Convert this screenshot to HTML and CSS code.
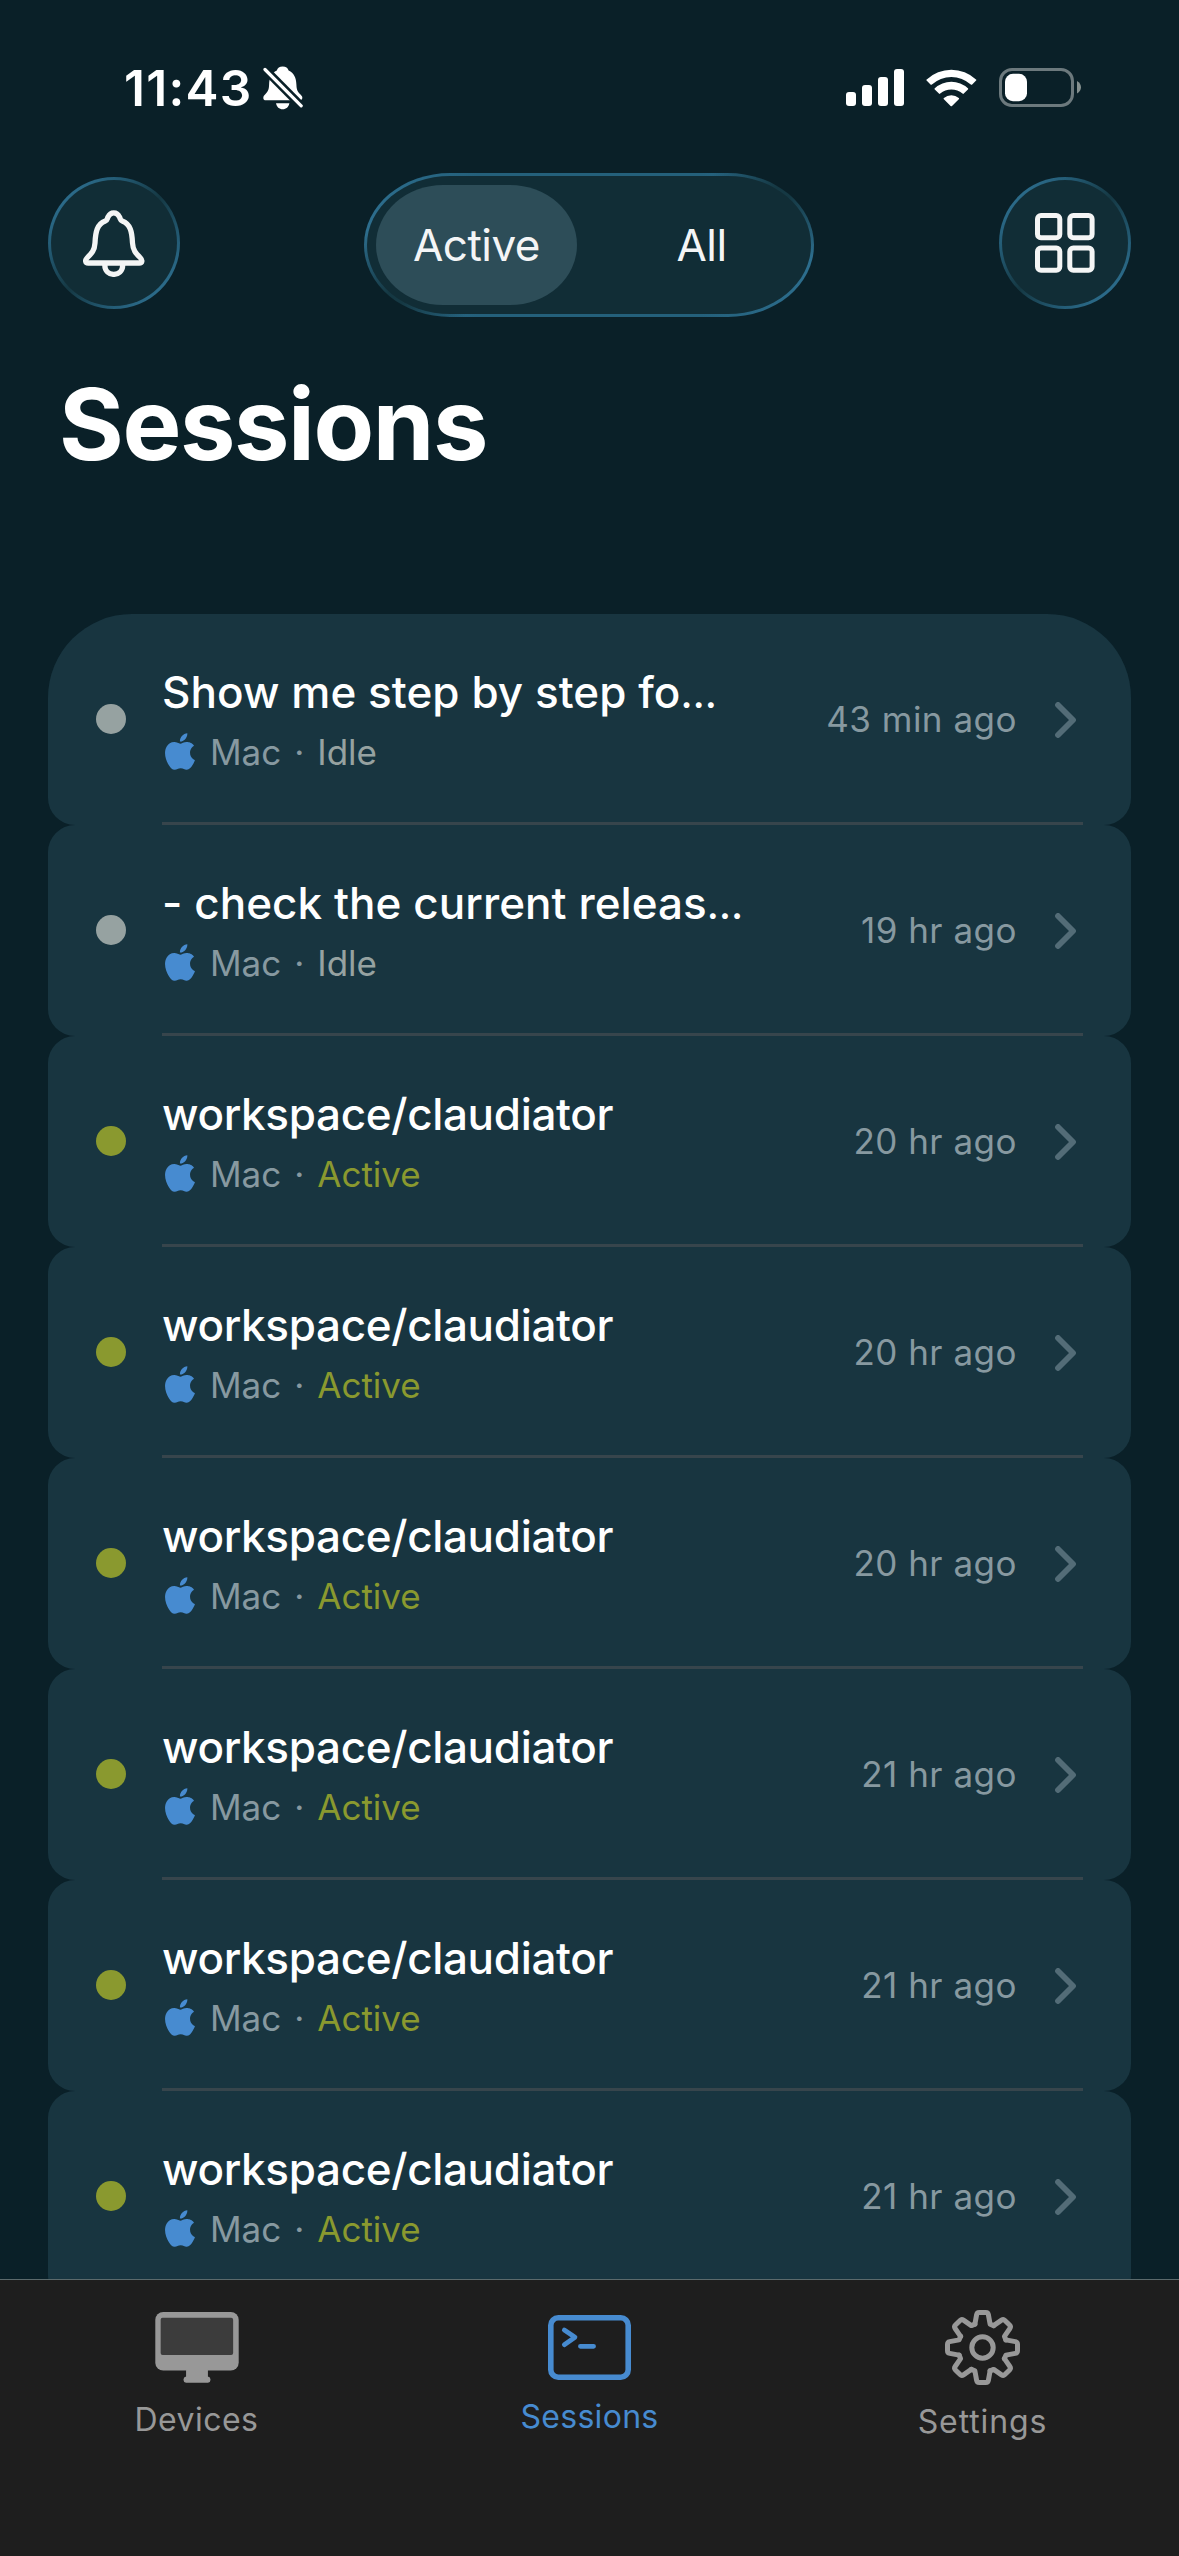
FILE: index.html
```
<!DOCTYPE html>
<html lang="en">
<head>
<meta charset="utf-8">
<title>Sessions</title>
<link rel="stylesheet" href="styles.css">
</head>
<body>
<svg class="defs" aria-hidden="true">
  <symbol id="apple" viewBox="2.2 0 19.6 24"><path d="M12.152 6.896c-.948 0-2.415-1.078-3.96-1.04-2.04.027-3.91 1.183-4.961 3.014-2.117 3.675-.546 9.103 1.519 12.09 1.013 1.454 2.208 3.09 3.792 3.039 1.52-.065 2.09-.987 3.935-.987 1.831 0 2.35.987 3.96.948 1.637-.026 2.676-1.48 3.676-2.948 1.156-1.688 1.636-3.325 1.662-3.415-.039-.013-3.182-1.221-3.22-4.857-.026-3.04 2.48-4.494 2.597-4.559-1.429-2.09-3.623-2.324-4.39-2.376-2-.156-3.675 1.09-4.61 1.09zM15.53 3.83c.843-1.012 1.4-2.427 1.245-3.83-1.207.052-2.662.805-3.532 1.818-.78.896-1.454 2.338-1.273 3.714 1.338.104 2.715-.688 3.559-1.701"/></symbol>
  <symbol id="chevron" viewBox="0 0 21 36"><path d="M3 3 18 18 3 33" fill="none" stroke="currentColor" stroke-width="5.8" stroke-linecap="round" stroke-linejoin="round"/></symbol>
</svg>
<div class="app">
  <div class="status">
    <div class="status-left">
      <span class="clock">11:43</span>
      <svg class="silent" viewBox="0 0 40 44" width="40" height="44">
        <path fill="#fff" d="M19.7.5C23 .5 24.800 2 25.600 4.600 31 7 33.200 12 33.400 18.500 33.600 24 34.500 25.500 37.500 28.500 39.200 30.300 39.500 31 39.300 32.300 39.100 33.600 38.200 34.300 36.500 34.300H3C1.300 34.300.3 33.400.3 31.900.3 30.300 1.200 29.300 2.500 28 5.200 25.200 5.900 23.500 6.100 18.500 6.300 12 8.500 7 13.800 4.600 14.600 2 16.400.5 19.700.5ZM13 37.300H26.400C25.700 41 23.200 43.300 19.700 43.300S13.700 41 13 37.300Z"/>
        <path class="slash-gap" d="M-1 .3 41 42.700"/>
        <path stroke="#fff" stroke-width="3.200" stroke-linecap="round" d="M2 3.500 38.200 39.800"/>
      </svg>
    </div>
    <div class="status-right">
      <svg viewBox="0 0 58 37" width="58" height="37" fill="#fff"><rect y="23" width="10" height="14" rx="3"/><rect x="16" y="16" width="10" height="21" rx="3"/><rect x="32" y="8" width="10" height="29" rx="3"/><rect x="48" width="10" height="37" rx="3"/></svg>
      <svg viewBox="0 0 51 38" width="51" height="38" fill="#fff"><path d="M.6 11.600Q0 11 .7 10.400A36 36 0 0 1 50 10.400Q50.700 11 50.100 11.600L46.200 15.500Q45.500 16.100 44.800 15.500A29 29 0 0 0 5.900 15.500Q5.200 16.100 4.500 15.500ZM8.800 20.500Q8.200 19.900 8.800 19.300A24.500 24.500 0 0 1 41.900 19.300Q42.500 19.900 41.900 20.500L37.800 24.600Q37.200 25.200 36.500 24.600A17 17 0 0 0 14.200 24.600Q13.500 25.200 12.900 24.600ZM17.900 30.200Q17.300 29.600 17.900 29.100A11.500 11.500 0 0 1 32.800 29.100Q33.400 29.600 32.800 30.200L26 37Q25.300 37.700 24.600 37Z"/></svg>
      <svg viewBox="0 0 82 39" width="82" height="39"><rect x="1.500" y="1.500" width="72" height="36" rx="11.500" fill="none" stroke="#6c797d" stroke-width="3"/><rect x="6" y="5.800" width="22" height="27.400" rx="8" fill="#fff"/><path fill="#85908f" d="M78 13C83.300 15.500 83.300 23 78 25.500Z"/></svg>
    </div>
  </div>

  <header class="toolbar">
    <button class="round glass" aria-label="Notifications">
      <svg viewBox="0 0 62 67" width="62" height="67" fill="none" stroke="#f4f5f5" stroke-width="5.300" stroke-linejoin="round"><path d="M5.200 53C2.300 53 1.800 50.200 4 48 9 43 11.500 40.500 12 33 12.500 22 14 14 22.300 11 24.300 10.300 24 9 25 7 27.500 1.500 34 1.500 36.500 7 37.500 9 37.200 10.300 39.200 11 47.500 14 49 22 49.500 33 50 40.500 52.500 43 57.500 48 59.700 50.200 59.200 53 56.300 53Z"/><path d="M21.800 55C21.800 67.500 39.700 67.500 39.700 55"/></svg>
    </button>
    <div class="segments glass">
      <span class="segment selected">Active</span>
      <span class="segment">All</span>
    </div>
    <button class="round glass" aria-label="Grid view">
      <svg viewBox="0 0 60 60" width="60" height="60" fill="none" stroke="#f4f5f5" stroke-width="5"><rect x="2.500" y="2.500" width="22.300" height="22.300" rx="3.500"/><rect x="34.800" y="2.500" width="22.300" height="22.300" rx="3.500"/><rect x="2.500" y="35" width="22.300" height="22.300" rx="3.500"/><rect x="34.800" y="35" width="22.300" height="22.300" rx="3.500"/></svg>
    </button>
  </header>

  <h1 class="title">Sessions</h1>

  <main class="list">
    <div class="row idle"><span class="dot"></span><div class="info"><div class="name long">Show me step by step fo<span class="ellipsis">…</span></div><div class="meta"><svg class="apple"><use href="#apple"/></svg><span>Mac</span><span class="sep">·</span><span class="state">Idle</span></div></div><span class="time">43 min ago</span><svg class="chevron"><use href="#chevron"/></svg></div>
    <div class="row idle"><span class="dot"></span><div class="info"><div class="name long">- check the current releas<span class="ellipsis">…</span></div><div class="meta"><svg class="apple"><use href="#apple"/></svg><span>Mac</span><span class="sep">·</span><span class="state">Idle</span></div></div><span class="time">19 hr ago</span><svg class="chevron"><use href="#chevron"/></svg></div>
    <div class="row"><span class="dot"></span><div class="info"><div class="name">workspace/claudiator</div><div class="meta"><svg class="apple"><use href="#apple"/></svg><span>Mac</span><span class="sep">·</span><span class="state">Active</span></div></div><span class="time">20 hr ago</span><svg class="chevron"><use href="#chevron"/></svg></div>
    <div class="row"><span class="dot"></span><div class="info"><div class="name">workspace/claudiator</div><div class="meta"><svg class="apple"><use href="#apple"/></svg><span>Mac</span><span class="sep">·</span><span class="state">Active</span></div></div><span class="time">20 hr ago</span><svg class="chevron"><use href="#chevron"/></svg></div>
    <div class="row"><span class="dot"></span><div class="info"><div class="name">workspace/claudiator</div><div class="meta"><svg class="apple"><use href="#apple"/></svg><span>Mac</span><span class="sep">·</span><span class="state">Active</span></div></div><span class="time">20 hr ago</span><svg class="chevron"><use href="#chevron"/></svg></div>
    <div class="row"><span class="dot"></span><div class="info"><div class="name">workspace/claudiator</div><div class="meta"><svg class="apple"><use href="#apple"/></svg><span>Mac</span><span class="sep">·</span><span class="state">Active</span></div></div><span class="time">21 hr ago</span><svg class="chevron"><use href="#chevron"/></svg></div>
    <div class="row"><span class="dot"></span><div class="info"><div class="name">workspace/claudiator</div><div class="meta"><svg class="apple"><use href="#apple"/></svg><span>Mac</span><span class="sep">·</span><span class="state">Active</span></div></div><span class="time">21 hr ago</span><svg class="chevron"><use href="#chevron"/></svg></div>
    <div class="row"><span class="dot"></span><div class="info"><div class="name">workspace/claudiator</div><div class="meta"><svg class="apple"><use href="#apple"/></svg><span>Mac</span><span class="sep">·</span><span class="state">Active</span></div></div><span class="time">21 hr ago</span><svg class="chevron"><use href="#chevron"/></svg></div>
  </main>

  <nav class="tabs">
    <a class="tab devices">
      <svg viewBox="0 0 84 71.500" width="84" height="71"><rect width="84" height="59" rx="8" fill="#989898"/><rect x="5.400" y="5.700" width="73" height="37.600" rx="2" fill="#3c3c3c"/><path fill="#989898" d="M31 58H53V65A3.200 3.200 0 0 1 53 71.300H31A3.200 3.200 0 0 1 31 65Z"/></svg>
      <span>Devices</span>
    </a>
    <a class="tab current">
      <svg viewBox="0 0 83 65" width="83" height="65" fill="none" stroke="#478bd0" stroke-linecap="round" stroke-linejoin="round"><rect x="2.800" y="2.800" width="77.400" height="59.400" rx="7.500" stroke-width="5.600"/><path stroke-width="4.700" d="M16.300 15 27 22.300 16.300 29.700M32.400 31.300H45.600"/></svg>
      <span>Sessions</span>
    </a>
    <a class="tab settings">
      <svg viewBox="-37.500 -37.500 75 75" width="75" height="75" fill="none" stroke="#989898" stroke-width="5" stroke-linecap="round" stroke-linejoin="round">
        <defs><path id="tooth" d="M-7.600-23.400-5.900-32.800Q-5.500-35-3.300-35H3.300Q5.500-35 5.900-32.800L7.600-23.400 11.200-21.900"/></defs>
        <use href="#tooth"/><use href="#tooth" transform="rotate(45)"/><use href="#tooth" transform="rotate(90)"/><use href="#tooth" transform="rotate(135)"/><use href="#tooth" transform="rotate(180)"/><use href="#tooth" transform="rotate(225)"/><use href="#tooth" transform="rotate(270)"/><use href="#tooth" transform="rotate(315)"/>
        <circle r="10.700"/>
      </svg>
      <span>Settings</span>
    </a>
  </nav>
</div>
</body>
</html>
```

FILE: styles.css
```
* { box-sizing: border-box; }

body {
  margin: 0;
  background: #0a2028;
  color: #fff;
  font-family: Inter, "Liberation Sans", sans-serif;
}

svg { display: block; flex: none; }
.defs { position: absolute; width: 0; height: 0; }

.app {
  width: 1179px;
  height: 2556px;
  display: flex;
  flex-direction: column;
  overflow: hidden;
}

/* Status bar */
.status {
  flex: none;
  height: 173px;
  padding: 58px 98px 0 124px;
  display: flex;
  justify-content: space-between;
  align-items: flex-start;
}
.status-left, .status-right { display: flex; align-items: center; }
.status-left { height: 60px; gap: 12px; }
.status-right { height: 59px; gap: 22px; }
.clock {
  width: 127px;
  font-size: 49.5px;
  font-weight: 600;
  line-height: 60px;
  letter-spacing: 1.3px;
}
.silent { fill: none; }
.slash-gap { stroke: #0a2028; stroke-width: 8.4; }

/* Toolbar */
.toolbar {
  flex: none;
  height: 144px;
  padding: 0 48px;
  display: flex;
  justify-content: space-between;
  align-items: flex-start;
}
.glass {
  border: 3px solid transparent;
  background:
    linear-gradient(#112d36, #112d36) padding-box,
    linear-gradient(to bottom right, #2d6e8e 12%, #235a73 28%, #153843 50%, #235a73 72%, #2d6e8e 88%) border-box;
}
.round {
  width: 132px;
  height: 132px;
  margin-top: 4px;
  padding: 0;
  border-radius: 50%;
  display: flex;
  align-items: center;
  justify-content: center;
}
.segments {
  width: 450px;
  height: 144px;
  margin-right: 1px;
  padding: 9px;
  border-radius: 86px / 72px;
  display: flex;
  justify-content: space-between;
  background:
    linear-gradient(#112d36, #112d36) padding-box,
    radial-gradient(circle at 418px 20px, #153843 8px, transparent 72px) border-box,
    radial-gradient(circle at 32px 124px, #153843 8px, transparent 72px) border-box,
    linear-gradient(to right, #2d6e8e, #24607b 25%, #24607b 75%, #2d6e8e) border-box;
}
.segment {
  width: 201px;
  border-radius: 67px / 60px;
  color: #f4f5f6;
  font-size: 44px;
  line-height: 120px;
  letter-spacing: -0.5px;
  text-align: center;
}
.selected { background: #2d4d58; }

.title {
  flex: none;
  margin: 47px 0 130px 59px;
  font-size: 99px;
  font-weight: 700;
  line-height: 120px;
  letter-spacing: -1.4px;
}

/* Session list */
.list {
  flex: 1;
  min-height: 0;
  padding: 0 48px;
  overflow: hidden;
}
.row {
  position: relative;
  height: 211px;
  padding: 0 55px 0 48px;
  display: flex;
  align-items: center;
  border-radius: 27px;
  background: #183540;
}
.row:first-child { border-radius: 84px 84px 27px 27px; }
.row::after {
  content: "";
  position: absolute;
  right: 48px;
  bottom: 0;
  left: 114px;
  height: 3px;
  background: #37454c;
}
.dot {
  width: 30px;
  height: 30px;
  margin: 0 36px 1px 0;
  border-radius: 50%;
  background: #8a992f;
}
.info {
  flex: 1;
  display: flex;
  flex-direction: column;
  gap: 11px;
}
.name {
  font-size: 44px;
  font-weight: 500;
  line-height: 54px;
  letter-spacing: -0.33px;
  white-space: nowrap;
}
.long { letter-spacing: 0.06px; }
.ellipsis { font-size: 40px; line-height: 1; }
.meta {
  display: flex;
  align-items: center;
  padding-left: 3px;
  color: #8799a0;
  font-size: 35px;
  line-height: 44px;
}
.apple { width: 30px; height: 37px; margin: -1px 15px 0 0; fill: #478bd0; }
.sep { width: 36px; text-align: center; }
.state { color: #8a992f; }
.idle .state { color: #96a2a1; }
.idle .dot { background: #96a2a1; }
.time {
  margin-bottom: 2px;
  color: #8799a0;
  font-size: 35px;
  line-height: 44px;
  letter-spacing: 0.5px;
}
.chevron { width: 21px; height: 36px; margin-left: 38px; color: #536c77; }

/* Tab bar */
.tabs {
  flex: none;
  height: 277px;
  display: grid;
  grid-template-columns: repeat(3, 1fr);
  border-top: 1px solid #5c6a6c;
  background: #1e1e1e;
}
.tab {
  padding-top: 32px;
  display: flex;
  flex-direction: column;
  align-items: center;
  gap: 17px;
  color: #989898;
  font-size: 32px;
  line-height: 40px;
  letter-spacing: 0.45px;
}
.current { padding-top: 35px; color: #478bd0; letter-spacing: 0.3px; }
.settings { padding-top: 30px; letter-spacing: 0.9px; }
```
